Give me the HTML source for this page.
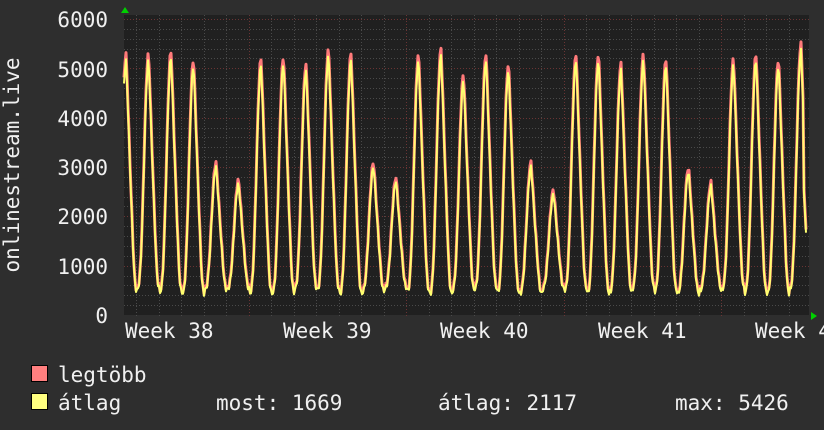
<!DOCTYPE html>
<html><head><meta charset="utf-8"><style>
html,body{margin:0;padding:0;background:#2e2e2e;}
svg{display:block}
text{font-family:"DejaVu Sans Mono","Liberation Mono",monospace;fill:#f0f0f0;font-size:21px}
</style></head><body>
<svg id="s" width="824" height="430" xmlns="http://www.w3.org/2000/svg">
<rect width="824" height="430" fill="#2e2e2e"/>
<rect x="124" y="15" width="685" height="300" fill="#202020"/>
<g id="grid"></g>
<polyline id="mx" fill="none" stroke="#ff7a7a" stroke-width="3" stroke-linejoin="round"/>
<polyline id="av" fill="none" stroke="#ffff70" stroke-width="2" stroke-linejoin="round"/>
<polygon points="121,13 129,13 125,7" fill="#00d000"/>
<polygon points="811,312 811,320 817,316" fill="#00d000"/>
<g text-anchor="end">
<text x="108" y="27">6000</text>
<text x="108" y="77">5000</text>
<text x="108" y="126">4000</text>
<text x="108" y="175">3000</text>
<text x="108" y="224">2000</text>
<text x="108" y="274">1000</text>
<text x="108" y="323">0</text>
</g>
<text transform="translate(19,165) rotate(-90)" text-anchor="middle">onlinestream.live</text>
<text x="125" y="338">Week 38</text>
<text x="283" y="338">Week 39</text>
<text x="440" y="338">Week 40</text>
<text x="598" y="338">Week 41</text>
<text x="755" y="338">Week 42</text>
<rect x="31.5" y="365.5" width="16" height="16" fill="#ff7f7f" stroke="#000"/>
<rect x="31.5" y="393.5" width="16" height="16" fill="#ffff7f" stroke="#000"/>
<text x="58" y="382">legtöbb</text>
<text x="58" y="410">átlag</text>
<text x="216" y="410">most: 1669</text>
<text x="438" y="410">átlag: 2117</text>
<text x="675" y="410">max: 5426</text>
</svg>
<script>
var g=document.getElementById('grid'),h='';
var L=124,R=809,T=15,B=315;
function Y(v){return B-v*296/6000;}
for(var v=200;v<=6000;v+=200){var y=Math.round(Y(v))+0.5;var maj=v%1000==0;
h+='<line x1="'+L+'" x2="'+R+'" y1="'+y+'" y2="'+y+'" stroke="'+(maj?'#6a3434':'#4a4a4a')+'" stroke-dasharray="1,2"/>';}
var w0=91;for(var x=w0;x<R;x+=22.5){if(x<L)continue;var xx=Math.round(x)+0.5;var maj=Math.abs(((x-w0)/157.5)-Math.round((x-w0)/157.5))<0.01;
h+='<line x1="'+xx+'" x2="'+xx+'" y1="'+T+'" y2="'+(B+3)+'" stroke="'+(maj?'#6a3434':'#4a4a4a')+'" stroke-dasharray="1,2"/>';}
g.innerHTML=h;
var peaks=[5150,5150,5200,5050,3000,2650,5050,5100,4950,5250,5150,3000,2700,5150,5250,4750,5150,4950,3000,2450,5150,5150,4950,5150,5050,2900,2600,5050,5150,5050,5350];
var mx=[],av=[];
for(var x=L;x<=806;x+=1){
 var t=(x-126)/22.5;var i=Math.round(t);var d=t-i;
 var pk=peaks[Math.max(0,Math.min(peaks.length-1,i))];
 var mn=480+60*Math.sin(i*1.7);
 var f=Math.pow((1+Math.cos(2*Math.PI*d))/2,1.4);
 if(d>0&&d<0.3)f*=1-0.15*Math.sin(d*Math.PI/0.3);
 var a=mn+(pk-mn)*f+(Math.sin(x*2.3)*50);
 if(x>=804)a=1669+(806-x)*400;
 av.push(x+','+Y(a).toFixed(1));mx.push(x+','+Y(a*1.02+30).toFixed(1));}
document.getElementById('av').setAttribute('points',av.join(' '));
document.getElementById('mx').setAttribute('points',mx.join(' '));
</script>
</body></html>
